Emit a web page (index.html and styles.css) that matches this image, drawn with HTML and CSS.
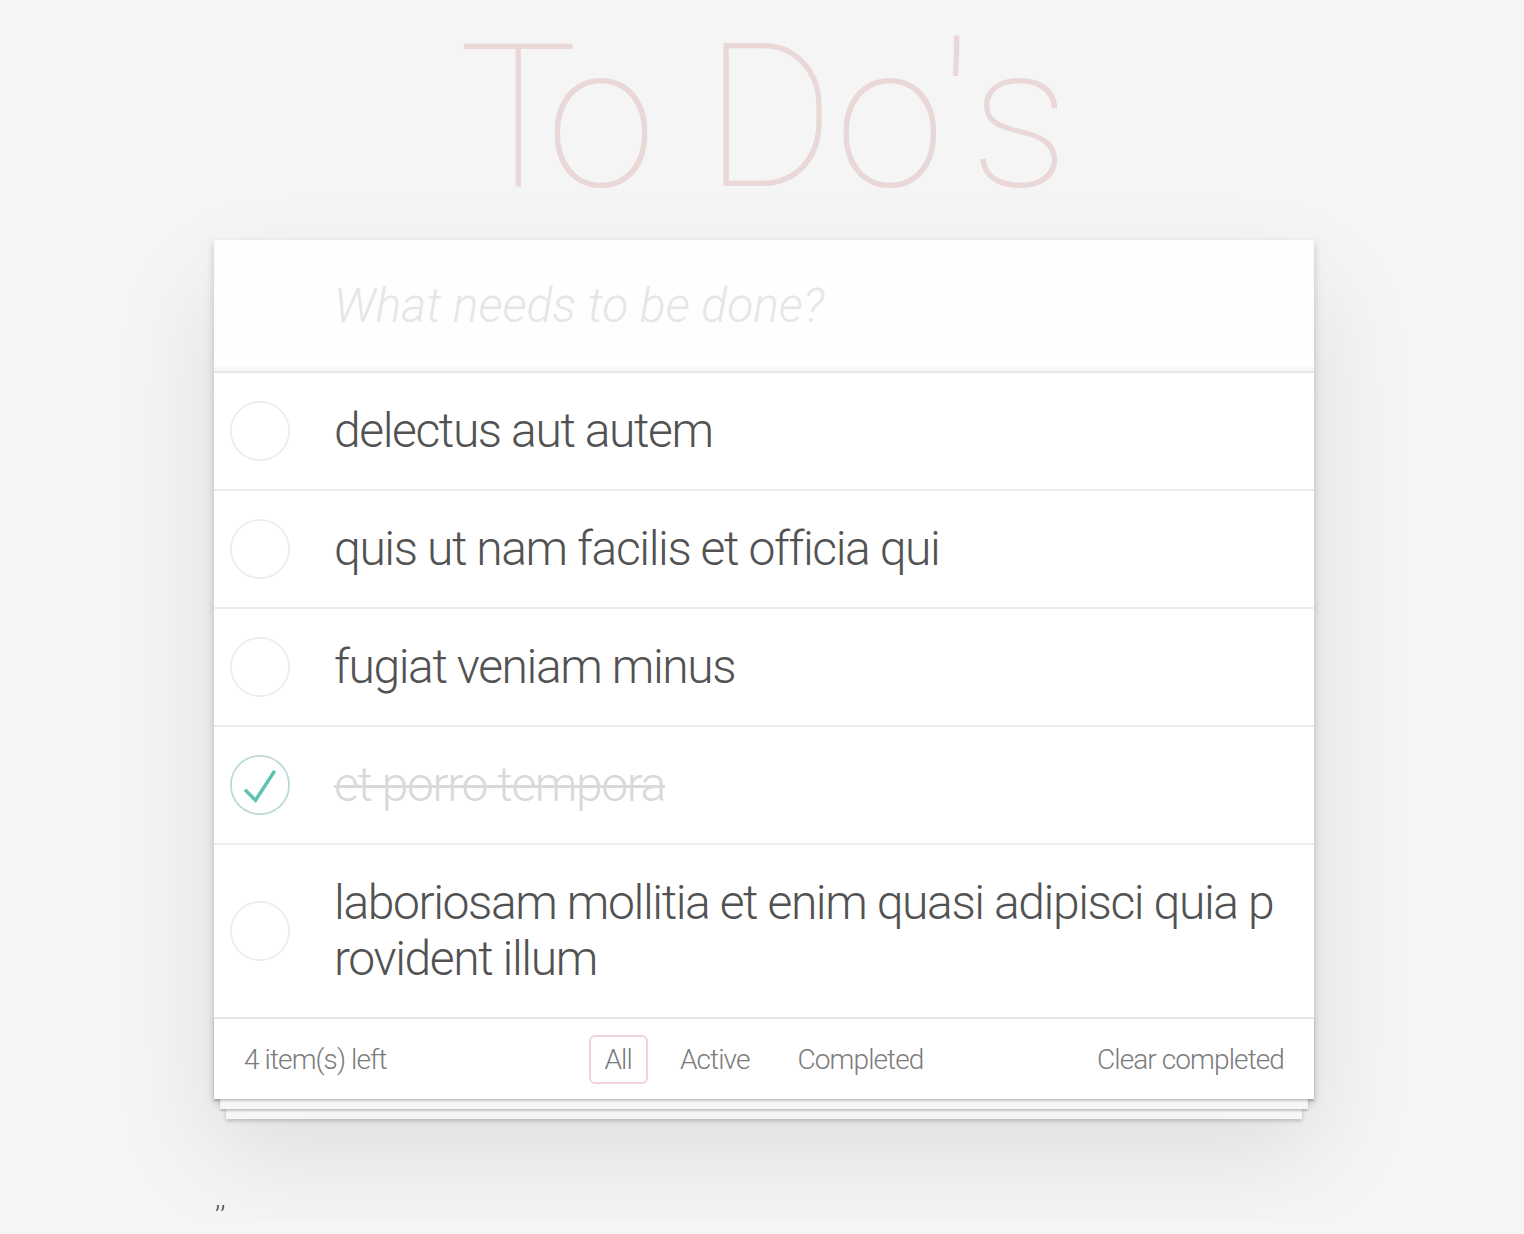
FILE: index.html
```html
<!DOCTYPE html>
<html lang="en">
<head>
<meta charset="utf-8">
<title>To Do's</title>
<link rel="stylesheet" href="styles.css">
</head>
<body>
<div class="page">
  <h1 class="title"><span class="kern-t">T</span>o Do<span class="apos">'</span>s</h1>
  <section class="todoapp">
    <header class="header">
      <input class="new-todo" placeholder="What needs to be done?">
    </header>
    <ul class="todo-list">
      <li class="todo">
        <svg class="toggle" viewBox="0 0 100 100"><circle cx="50" cy="50" r="48.5" fill="none" stroke="#ededed" stroke-width="3"/></svg>
        <label class="todo-label">delectus aut autem</label>
      </li>
      <li class="todo">
        <svg class="toggle" viewBox="0 0 100 100"><circle cx="50" cy="50" r="48.5" fill="none" stroke="#ededed" stroke-width="3"/></svg>
        <label class="todo-label">quis ut nam facilis et officia qui</label>
      </li>
      <li class="todo">
        <svg class="toggle" viewBox="0 0 100 100"><circle cx="50" cy="50" r="48.5" fill="none" stroke="#ededed" stroke-width="3"/></svg>
        <label class="todo-label">fugiat veniam minus</label>
      </li>
      <li class="todo completed">
        <svg class="toggle" viewBox="0 0 100 100"><circle cx="50" cy="50" r="48.5" fill="none" stroke="#bddad5" stroke-width="3"/><path fill="#5dc2af" d="M72 25L42 71 27 56l-4 4 20 20 34-52z"/></svg>
        <label class="todo-label">et porro tempora</label>
      </li>
      <li class="todo">
        <svg class="toggle" viewBox="0 0 100 100"><circle cx="50" cy="50" r="48.5" fill="none" stroke="#ededed" stroke-width="3"/></svg>
        <label class="todo-label">laboriosam mollitia et enim quasi adipisci quia provident illum</label>
      </li>
    </ul>
    <footer class="footer">
      <span class="todo-count">4 item(s) left</span>
      <ul class="filters">
        <li><a class="filter selected">All</a></li>
        <li><a class="filter">Active</a></li>
        <li><a class="filter">Completed</a></li>
      </ul>
      <button class="clear-completed">Clear completed</button>
    </footer>
  </section>
  <p class="info">,,</p>
</div>
</body>
</html>
```

FILE: styles.css
```css
* {
  box-sizing: border-box;
}

html,
body {
  margin: 0;
  padding: 0;
}

body {
  background: #f5f5f5;
  font-family: Roboto, "Helvetica Neue", "Liberation Sans", sans-serif;
  font-weight: 300;
  color: #4d4d4d;
}

.page {
  width: 1104px;
  margin: 0 auto;
  padding: 18px 0 0 4px;
}

.title {
  margin: 0;
  height: 222px;
  font-size: 200px;
  line-height: 200px;
  font-weight: 100;
  text-align: center;
  color: rgba(175, 47, 47, 0.15);
  white-space: nowrap;
}

.kern-t {
  margin-right: -32px;
}

.apos {
  margin: 0 -3px 0 -5px;
}

.todoapp {
  background: #fff;
  box-shadow: 0 4px 8px 0 rgba(0, 0, 0, 0.2), 0 50px 100px 0 rgba(0, 0, 0, 0.1);
}

.new-todo {
  display: block;
  width: 100%;
  height: 131px;
  margin: 0;
  padding: 0 32px 0 120px;
  border: none;
  outline: none;
  background: rgba(0, 0, 0, 0.003);
  box-shadow: inset 0 -4px 2px rgba(0, 0, 0, 0.03);
  font-family: inherit;
  font-size: 48px;
  font-weight: 300;
  color: #4d4d4d;
}

.new-todo::placeholder {
  font-style: italic;
  font-weight: 300;
  color: #e6e6e6;
}

.todo-list {
  margin: 0;
  padding: 0;
  list-style: none;
  border-top: 2px solid #e6e6e6;
}

.todo {
  display: flex;
  align-items: center;
  border-bottom: 2px solid #ededed;
}

.todo:last-child {
  border-bottom: none;
}

.toggle {
  flex: none;
  width: 60px;
  height: 60px;
  margin: 0 44px 0 16px;
}

.todo-label {
  flex: 1;
  min-width: 0;
  padding: 30px 30px 30px 0;
  font-size: 48px;
  line-height: 56px;
  letter-spacing: -1.4px;
  color: #525252;
  word-break: break-all;
}

.completed .todo-label {
  color: #d9d9d9;
  text-decoration: line-through;
  text-decoration-thickness: 3px;
}

.footer {
  display: grid;
  grid-template-columns: 1fr auto 1fr;
  align-items: center;
  height: 82px;
  padding: 0 30px;
  border-top: 2px solid #e6e6e6;
  background: #fff;
  color: #7b7b7b;
  font-size: 28px;
  letter-spacing: -0.9px;
  box-shadow: 0 2px 2px rgba(0, 0, 0, 0.2),
    0 16px 0 -6px #f6f6f6,
    0 18px 2px -6px rgba(0, 0, 0, 0.2),
    0 32px 0 -12px #f6f6f6,
    0 34px 4px -12px rgba(0, 0, 0, 0.2);
}

.todo-count {
  justify-self: start;
}

.filters {
  display: flex;
  gap: 16px;
  margin: 0;
  padding: 0;
  list-style: none;
}

.filter {
  display: block;
  padding: 6px 14px;
  border: 2px solid transparent;
  border-radius: 6px;
  color: inherit;
  text-decoration: none;
}

.filter.selected {
  border-color: rgba(175, 47, 47, 0.2);
}

.clear-completed {
  justify-self: end;
  margin: 0;
  padding: 0;
  border: none;
  background: none;
  font-family: inherit;
  font-size: inherit;
  font-weight: 300;
  letter-spacing: inherit;
  color: inherit;
}

.info {
  margin: 80px 0 0;
  padding-left: 1px;
  font-size: 28px;
  line-height: 40px;
}
```
